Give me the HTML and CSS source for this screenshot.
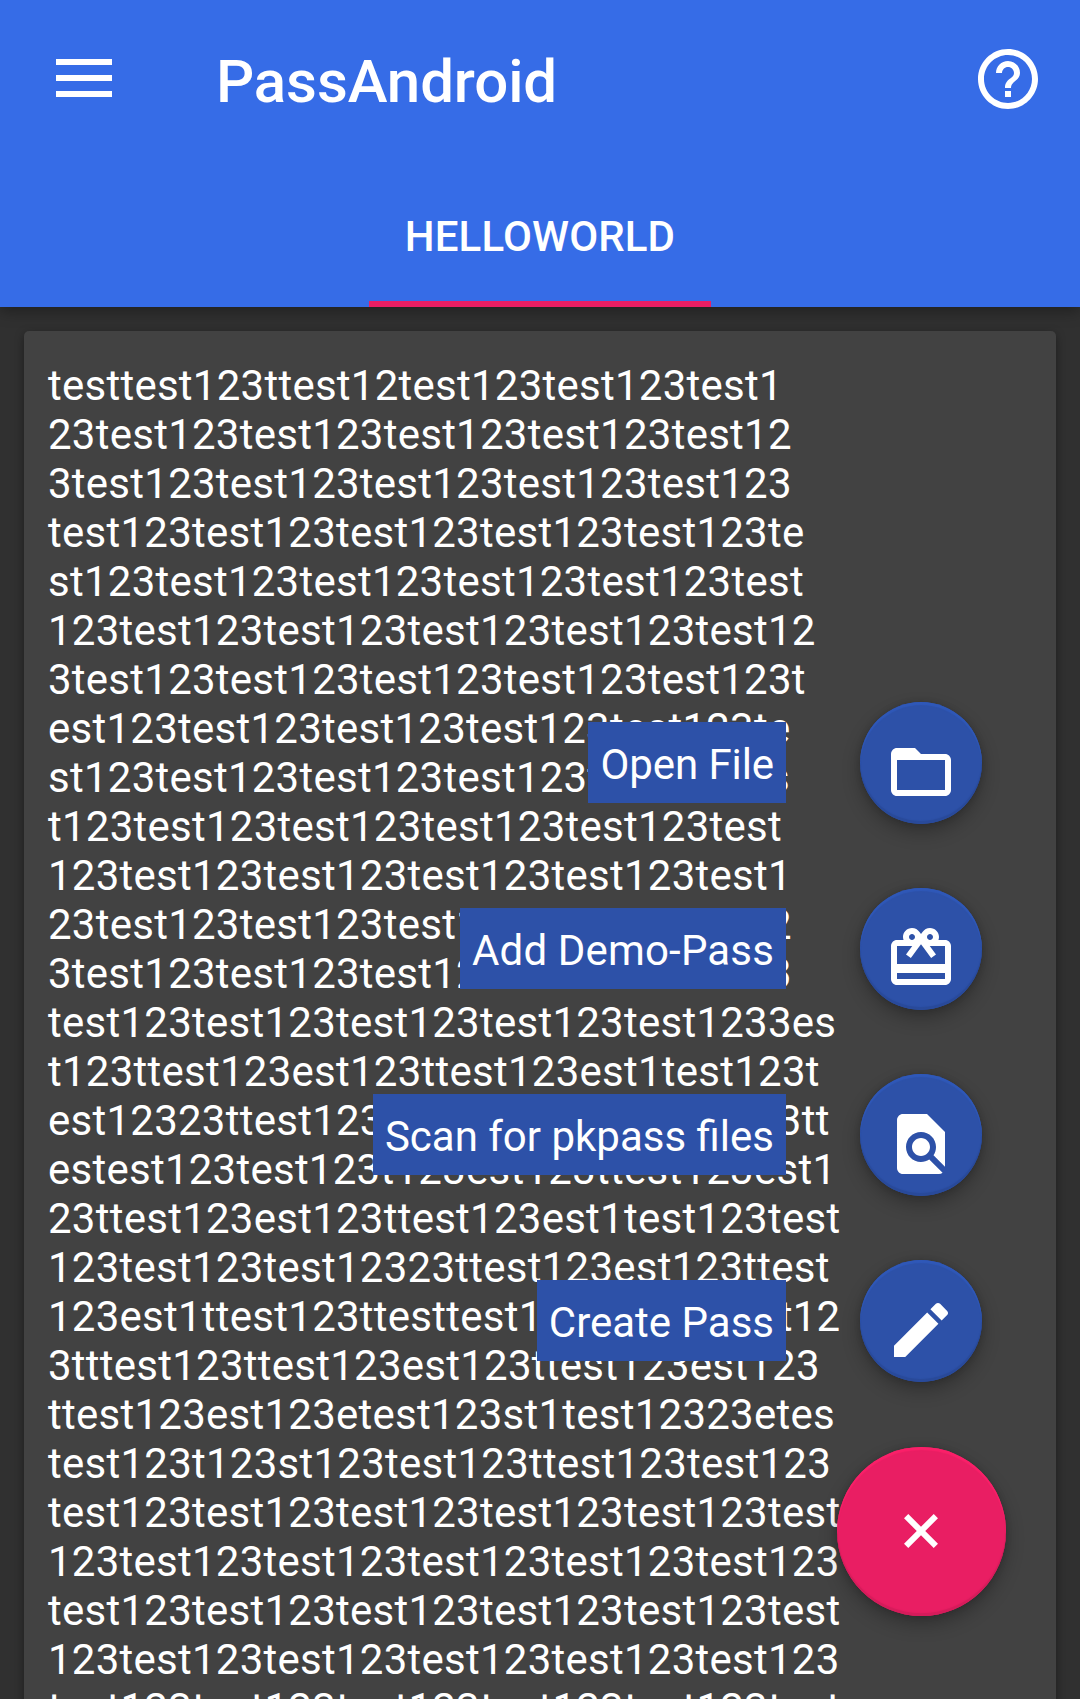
FILE: index.html
```html
<!DOCTYPE html>
<html lang="en">
<head>
<meta charset="utf-8">
<title>PassAndroid</title>
<link rel="stylesheet" href="styles.css">
</head>
<body>
<div class="screen">
  <header class="app-bar">
    <div class="toolbar">
      <button class="icon-button menu-button" aria-label="Menu">
        <svg width="56" height="38" viewBox="0 0 56 38"><path d="M0 0h56v6H0zM0 16h56v6H0zM0 32h56v6H0z"/></svg>
      </button>
      <h1 class="title">PassAndroid</h1>
      <button class="icon-button" aria-label="Help">
        <svg width="72" height="72" viewBox="0 0 24 24"><path d="M11 18h2v-2h-2v2zm1-16C6.480 2 2 6.480 2 12s4.480 10 10 10 10-4.480 10-10S17.520 2 12 2zm0 18c-4.410 0-8-3.590-8-8s3.590-8 8-8 8 3.590 8 8-3.590 8-8 8zm0-14c-2.210 0-4 1.790-4 4h2c0-1.100.9-2 2-2s2 .9 2 2c0 2-3 1.750-3 5h2c0-2.250 3-2.500 3-5 0-2.210-1.790-4-4-4z"/></svg>
      </button>
    </div>
    <nav class="tabs"><a class="tab">HELLOWORLD</a></nav>
  </header>

  <main class="content">
    <p class="pass-card">
      testtest123ttest12test123test123test1<br>
      23test123test123test123test123test12<br>
      3test123test123test123test123test123<br>
      test123test123test123test123test123te<br>
      st123test123test123test123test123test<br>
      123test123test123test123test123test12<br>
      3test123test123test123test123test123t<br>
      est123test123test123test123test123te<br>
      st123test123test123test123test123tes<br>
      t123test123test123test123test123test<br>
      123test123test123test123test123test1<br>
      23test123test123test123test123test12<br>
      3test123test123test123test123test123<br>
      test123test123test123test123test1233es<br>
      t123ttest123est123ttest123est1test123t<br>
      est12323ttest123est123ttest123est123tt<br>
      estest123test123t123est123ttest123est1<br>
      23ttest123est123ttest123est1test123test<br>
      123test123test12323ttest123est123ttest<br>
      123est1ttest123ttesttest123est123test12<br>
      3tttest123ttest123est123ttest123est123<br>
      ttest123est123etest123st1test12323etes<br>
      test123t123st123test123ttest123test123<br>
      test123test123test123test123test123test<br>
      123test123test123test123test123test123<br>
      test123test123test123test123test123test<br>
      123test123test123test123test123test123<br>
      test123test123test123test123test123test
    </p>
  </main>

  <div class="fab-menu">
    <div class="action">
      <span class="label tight-text">Open File</span>
      <button class="fab mini" aria-label="Open File">
        <svg width="72" height="72" viewBox="0 0 24 24"><path d="M20 6h-8l-2-2H4c-1.100 0-1.990.9-1.990 2L2 18c0 1.100.9 2 2 2h16c1.100 0 2-.9 2-2V8c0-1.100-.9-2-2-2zm0 12H4V8h16v10z"/></svg>
      </button>
    </div>
    <div class="action">
      <span class="label wide-text">Add Demo-Pass</span>
      <button class="fab mini" aria-label="Add Demo-Pass">
        <svg width="72" height="72" viewBox="0 0 24 24"><path d="M20 6h-2.180c.11-.31.18-.65.18-1 0-1.660-1.340-3-3-3-1.050 0-1.960.54-2.500 1.350l-.5.67-.5-.68C10.960 2.540 10.050 2 9 2 7.340 2 6 3.340 6 5c0 .35.07.69.18 1H4c-1.110 0-1.990.89-1.990 2L2 19c0 1.110.89 2 2 2h16c1.110 0 2-.89 2-2V8c0-1.110-.89-2-2-2zm-5-2c.55 0 1 .45 1 1s-.45 1-1 1-1-.45-1-1 .45-1 1-1zM9 4c.55 0 1 .45 1 1s-.45 1-1 1-1-.45-1-1 .45-1 1-1zm11 15H4v-2h16v2zm0-5H4V8h5.080L7 10.830 8.620 12 11 8.760l1-1.360 1 1.360L15.380 12 17 10.830 14.920 8H20v6z"/></svg>
      </button>
    </div>
    <div class="action">
      <span class="label">Scan for pkpass files</span>
      <button class="fab mini" aria-label="Scan for pkpass files">
        <svg width="72" height="72" viewBox="0 0 24 24"><path d="M20 19.590V8l-6-6H6c-1.100 0-1.990.9-1.990 2L4 20c0 1.100.89 2 1.990 2H18c.45 0 .85-.15 1.190-.4l-4.430-4.430c-.8.52-1.740.83-2.760.83-2.760 0-5-2.240-5-5s2.240-5 5-5 5 2.240 5 5c0 1.020-.31 1.960-.83 2.750L20 19.590zM9 13c0 1.660 1.340 3 3 3s3-1.340 3-3-1.340-3-3-3-3 1.340-3 3z"/></svg>
      </button>
    </div>
    <div class="action">
      <span class="label">Create Pass</span>
      <button class="fab mini" aria-label="Create Pass">
        <svg width="72" height="72" viewBox="0 0 24 24"><path d="M3 17.250V21h3.750L17.810 9.940l-3.750-3.750L3 17.250zM20.710 7.040c.39-.39.39-1.020 0-1.410l-2.340-2.340c-.39-.39-1.020-.39-1.410 0l-1.830 1.830 3.750 3.750 1.830-1.830z"/></svg>
      </button>
    </div>
    <button class="fab main" aria-label="Close">
      <svg width="72" height="72" viewBox="0 0 24 24"><path transform="rotate(45 12 12)" d="M19 13h-6v6h-2v-6H5v-2h6V5h2v6h6v2z"/></svg>
    </button>
  </div>
</div>
</body>
</html>
```
FILE: styles.css
```css
* {
  box-sizing: border-box;
}

body {
  margin: 0;
  background: #303030;
  color: #fff;
  font-family: Roboto, "Liberation Sans", sans-serif;
  font-size: 42px;
  line-height: 49px;
}

button {
  display: flex;
  align-items: center;
  justify-content: center;
  padding: 0;
  border: 0;
  background: none;
}

svg {
  display: block;
  fill: #fff;
}

.screen {
  position: relative;
  display: flex;
  flex-direction: column;
  height: 1699px;
  overflow: hidden;
}

.app-bar {
  display: flex;
  flex-direction: column;
  flex: none;
  height: 307px;
  background: #366ce7;
  box-shadow: 0 4px 14px rgba(0, 0, 0, 0.35);
}

.toolbar {
  display: flex;
  align-items: center;
  height: 158px;
  padding: 0 36px 0 56px;
}

.menu-button {
  width: 56px;
  margin-bottom: 2px;
}

.title {
  flex: 1;
  margin: 6px 0 0 104px;
  font-size: 60px;
  font-weight: 500;
  letter-spacing: -0.1px;
  line-height: 70px;
}

.tabs {
  display: flex;
  flex: 1;
  justify-content: center;
}

.tab {
  width: 342px;
  padding-top: 54px;
  border-bottom: 6px solid #e91e63;
  font-weight: 500;
  letter-spacing: 0.14px;
  text-align: center;
}

.content {
  flex: 1;
  min-height: 0;
  padding: 24px 24px 0;
}

.pass-card {
  height: 1500px;
  margin: 0;
  padding: 30px 24px;
  border-radius: 5px;
  background: #424242;
  box-shadow: 0 3px 10px rgba(0, 0, 0, 0.4);
  letter-spacing: 0.25px;
  white-space: nowrap;
}

/* Speed dial floating over the pass list */
.fab-menu {
  position: absolute;
  top: 702px;
  right: 74px;
  display: flex;
  flex-direction: column;
  align-items: flex-end;
  gap: 64px;
}

.action {
  display: flex;
  align-items: center;
  gap: 74px;
  height: 122px;
  padding-right: 24px;
}

.label {
  height: 81px;
  margin-bottom: 1px;
  padding: 18px 12px 14px;
  background: #2d51a8;
}

.wide-text {
  letter-spacing: 0.16px;
}

.tight-text {
  letter-spacing: -0.08px;
}

.fab {
  border-radius: 50%;
}

.mini {
  width: 122px;
  height: 122px;
  padding-top: 18px;
  background: #2d51a8;
  box-shadow: 0 8px 18px rgba(0, 0, 0, 0.28), 0 0 6px rgba(0, 0, 0, 0.15),
    inset 0 3px 1px #2f58b8, inset 0 -3px 1px #294a9a;
}

.main {
  width: 169px;
  height: 169px;
  margin: 0.5px;
  background: #e91e63;
  box-shadow: 0 8px 18px rgba(0, 0, 0, 0.28), 0 0 6px rgba(0, 0, 0, 0.15),
    inset 0 3px 1px #fa2069, inset 0 -3px 1px #d51c5b;
}
```
